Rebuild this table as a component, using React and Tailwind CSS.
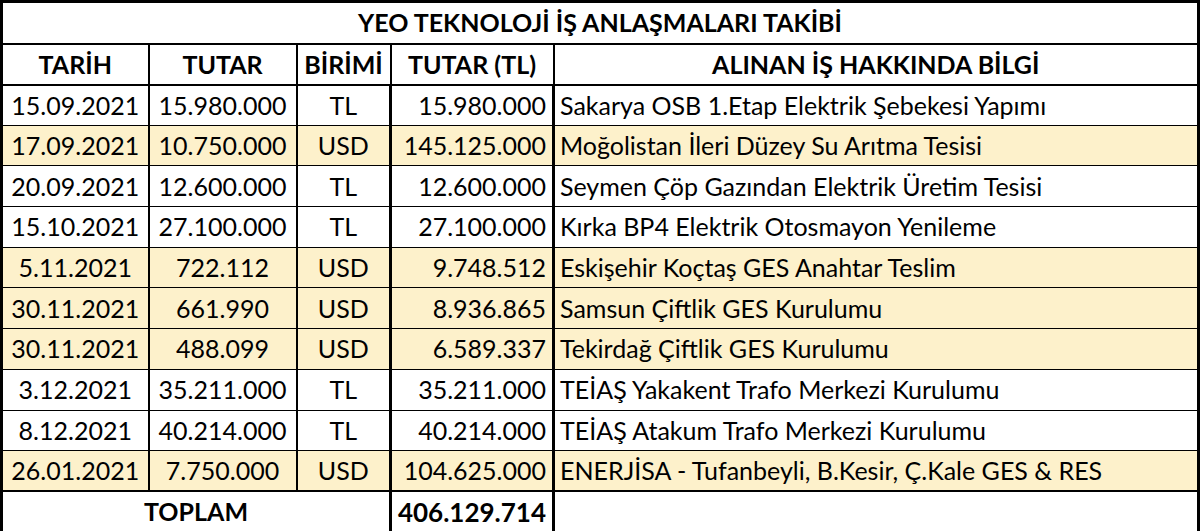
const rows = [
  ["15.09.2021", "15.980.000", "TL", "15.980.000", "Sakarya OSB 1.Etap Elektrik Şebekesi Yapımı", false],
  ["17.09.2021", "10.750.000", "USD", "145.125.000", "Moğolistan İleri Düzey Su Arıtma Tesisi", true],
  ["20.09.2021", "12.600.000", "TL", "12.600.000", "Seymen Çöp Gazından Elektrik Üretim Tesisi", false],
  ["15.10.2021", "27.100.000", "TL", "27.100.000", "Kırka BP4 Elektrik Otosmayon Yenileme", false],
  ["5.11.2021", "722.112", "USD", "9.748.512", "Eskişehir Koçtaş GES Anahtar Teslim", true],
  ["30.11.2021", "661.990", "USD", "8.936.865", "Samsun Çiftlik GES Kurulumu", true],
  ["30.11.2021", "488.099", "USD", "6.589.337", "Tekirdağ Çiftlik GES Kurulumu", true],
  ["3.12.2021", "35.211.000", "TL", "35.211.000", "TEİAŞ Yakakent Trafo Merkezi Kurulumu", false],
  ["8.12.2021", "40.214.000", "TL", "40.214.000", "TEİAŞ Atakum Trafo Merkezi Kurulumu", false],
  ["26.01.2021", "7.750.000", "USD", "104.625.000", "ENERJİSA - Tufanbeyli, B.Kesir, Ç.Kale GES & RES", true],
];

export default function App() {
  return (
    <div className="w-[1200px] h-[531px] bg-white overflow-hidden" style={{ fontFamily: "Lato, 'Open Sans', sans-serif" }}>
      <table className="w-[1200px] table-fixed border-collapse border-[3px] border-black text-black text-[25px] leading-none">
        <colgroup>
          <col className="w-[147px]" />
          <col className="w-[148px]" />
          <col className="w-[94px]" />
          <col className="w-[163px]" />
          <col />
        </colgroup>
        <tbody>
          <tr className="h-[42px]">
            <td colSpan={5} className="border-2 border-black text-center font-bold text-[25px]">
              YEO TEKNOLOJİ İŞ ANLAŞMALARI TAKİBİ
            </td>
          </tr>
          <tr className="h-[41px] font-bold text-[25px]">
            <td className="border-2 border-black text-center">TARİH</td>
            <td className="border-2 border-black text-center">TUTAR</td>
            <td className="border-2 border-black text-center">BİRİMİ</td>
            <td className="border-2 border-black text-center">TUTAR (TL)</td>
            <td className="border-2 border-black text-center">ALINAN İŞ HAKKINDA BİLGİ</td>
          </tr>
          {rows.map(([date, amt, cur, tl, info, usd], i) => (
            <tr key={i} className={`h-[40.7px] ${usd ? "bg-[#fdf1cb]" : "bg-white"}`}>
              <td className="border-x-2 border-y-[1.5px] border-black text-center">{date}</td>
              <td className="border-x-2 border-y-[1.5px] border-black text-center">{amt}</td>
              <td className="border-x-2 border-y-[1.5px] border-black text-center">{cur}</td>
              <td className="border-x-[3px] border-y-[1.5px] border-black text-right pr-[6px]">{tl}</td>
              <td className="border-x-2 border-y-[1.5px] border-black text-left pl-[5px] whitespace-nowrap">{info}</td>
            </tr>
          ))}
          <tr className="h-[41px] font-bold text-[25px]">
            <td colSpan={3} className="border-2 border-black text-center">TOPLAM</td>
            <td className="border-x-[3px] border-y-2 border-black text-right pr-[6px] text-[26px]">406.129.714</td>
            <td className="border-2 border-black"></td>
          </tr>
        </tbody>
      </table>
    </div>
  );
}
